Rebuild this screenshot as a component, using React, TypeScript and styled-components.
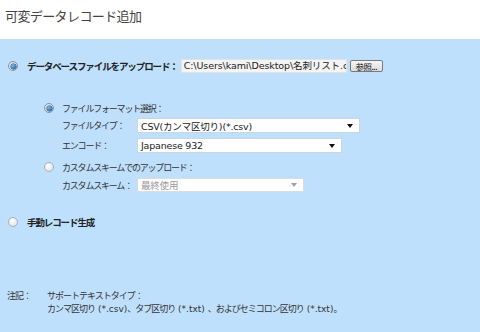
import React from "react";
import styled, { createGlobalStyle } from "styled-components";

const GlobalStyle = createGlobalStyle`
    html, body {
        margin: 0;
        padding: 0;
        background: #ffffff;
    }
    body {
        font-family: "Noto Sans CJK JP", "Noto Sans", sans-serif;
    }
`;

const Radio = ({ checked }: { checked?: boolean }) => (
    <RadioBox $checked={checked}>{checked && <RadioDot />}</RadioBox>
);

const App = () => {
    return (
        <>
            <GlobalStyle />
            <Page>
                <Title>可変データレコード追加</Title>
                <Panel>
                    <OptionRow>
                        <Radio checked />
                        <BoldLabel>データベースファイルをアップロード：</BoldLabel>
                        <FileInput>C:\Users\kami\Desktop\名刺リスト.c</FileInput>
                        <BrowseButton>参照...</BrowseButton>
                    </OptionRow>

                    <SubSection>
                        <OptionRow>
                            <Radio checked />
                            <Label>ファイルフォーマット選択：</Label>
                        </OptionRow>
                        <FieldGrid>
                            <FieldLabel>ファイルタイプ：</FieldLabel>
                            <Select $width={223}>
                                <SelectText>CSV(カンマ区切り)(*.csv)</SelectText>
                                <Arrow />
                            </Select>
                            <FieldLabel>エンコード：</FieldLabel>
                            <Select $width={205}>
                                <SelectText>Japanese 932</SelectText>
                                <Arrow />
                            </Select>
                        </FieldGrid>

                        <OptionRow $top={7}>
                            <Radio />
                            <Label>カスタムスキームでのアップロード：</Label>
                        </OptionRow>
                        <FieldGrid $top={4}>
                            <FieldLabel>カスタムスキーム：</FieldLabel>
                            <Select $width={167} $height={14} $disabled>
                                <SelectText>最終使用</SelectText>
                                <Arrow $disabled />
                            </Select>
                        </FieldGrid>
                    </SubSection>

                    <OptionRow $top={23}>
                        <Radio />
                        <BoldLabel>手動レコード生成</BoldLabel>
                    </OptionRow>

                    <Notes>
                        <NoteTitle>注記：</NoteTitle>
                        <NoteBody>
                            <div>サポートテキストタイプ：</div>
                            <div>
                                カンマ区切り<Latin> (*.csv)</Latin>、タブ区切り<Latin> (*.txt) </Latin>
                                、およびセミコロン区切り<Latin> (*.txt)</Latin>。
                            </div>
                        </NoteBody>
                    </Notes>
                </Panel>
            </Page>
        </>
    );
};

const Page = styled.div`
    width: 480px;
    height: 332px;
    display: flex;
    flex-direction: column;
    overflow: hidden;
`;

const Title = styled.div`
    height: 39px;
    box-sizing: border-box;
    padding: 7px 0 0 5px;
    font-size: 13px;
    line-height: 18px;
    letter-spacing: -0.6px;
    color: #444444;
`;

const Panel = styled.div`
    flex: 1;
    background-color: #bfe0fc;
    padding: 20px 0 0 8px;
    display: flex;
    flex-direction: column;
`;

const OptionRow = styled.div<{ $top?: number }>`
    display: flex;
    align-items: center;
    height: 14px;
    margin-top: ${(p) => p.$top ?? 0}px;
`;

const RadioBox = styled.span<{ $checked?: boolean }>`
    width: 10px;
    height: 10px;
    box-sizing: border-box;
    border-radius: 50%;
    border: 1px solid ${(p) => (p.$checked ? "#8a9299" : "#a9b0b6")};
    background: ${(p) =>
        p.$checked
            ? "radial-gradient(circle, #e8eef2 0%, #d3d9de 100%)"
            : "radial-gradient(circle at 40% 35%, #ffffff 0%, #e4e7ea 70%, #cfd3d7 100%)"};
    display: flex;
    align-items: center;
    justify-content: center;
    flex-shrink: 0;
`;

const RadioDot = styled.span`
    width: 5px;
    height: 5px;
    border-radius: 50%;
    background: radial-gradient(circle at 40% 35%, #78bdf0 0%, #1c5f9e 80%);
    box-shadow: 0 0 0 0.5px #1b4d7e;
`;

const BoldLabel = styled.span`
    margin-left: 9px;
    font-size: 9.5px;
    font-weight: 700;
    letter-spacing: -1.1px;
    color: #222222;
    white-space: nowrap;
`;

const Label = styled.span`
    margin-left: 8px;
    font-size: 9px;
    letter-spacing: -1.2px;
    color: #333333;
    white-space: nowrap;
`;

const FileInput = styled.div`
    margin-left: 3px;
    width: 166px;
    height: 14px;
    box-sizing: border-box;
    background: #f4f4f4;
    border: 1px solid #e2e2e2;
    padding: 0 2px;
    font-family: "DejaVu Sans", "Noto Sans CJK JP", sans-serif;
    font-size: 9.5px;
    line-height: 12px;
    color: #222222;
    white-space: nowrap;
    overflow: hidden;
    letter-spacing: -0.1px;
`;

const BrowseButton = styled.div`
    margin-left: 3px;
    width: 33px;
    height: 12px;
    box-sizing: border-box;
    border: 1px solid #7a7a7a;
    border-radius: 2px;
    background: linear-gradient(#f6f6f6, #dcdcdc);
    font-size: 8.5px;
    line-height: 10px;
    text-align: center;
    color: #111111;
    letter-spacing: -0.5px;
`;

const SubSection = styled.div`
    display: flex;
    flex-direction: column;
    margin-top: 28px;
    padding-left: 36px;
`;

const FieldGrid = styled.div<{ $top?: number }>`
    display: grid;
    grid-template-columns: 75px auto;
    row-gap: 5px;
    align-items: center;
    justify-items: start;
    margin-top: ${(p) => p.$top ?? 3}px;
    padding-left: 18px;
`;

const FieldLabel = styled.span`
    font-size: 9px;
    letter-spacing: -1.2px;
    color: #333333;
    white-space: nowrap;
`;

const Select = styled.div<{ $width: number; $height?: number; $disabled?: boolean }>`
    width: ${(p) => p.$width}px;
    height: ${(p) => p.$height ?? 15}px;
    box-sizing: border-box;
    background: #ffffff;
    border: 1px solid ${(p) => (p.$disabled ? "#d8dde2" : "#c9d6e2")};
    display: flex;
    align-items: center;
    justify-content: space-between;
    padding: 0 6px 0 3px;
    color: ${(p) => (p.$disabled ? "#9a9a9a" : "#222222")};
`;

const SelectText = styled.span`
    font-family: "DejaVu Sans", "Noto Sans CJK JP", sans-serif;
    font-size: 9.5px;
    letter-spacing: -0.2px;
    white-space: nowrap;
`;

const Arrow = styled.span<{ $disabled?: boolean }>`
    width: 0;
    height: 0;
    border-left: 3.5px solid transparent;
    border-right: 3.5px solid transparent;
    border-top: 4px solid ${(p) => (p.$disabled ? "#a0a0a0" : "#111111")};
`;

const Notes = styled.div`
    display: grid;
    grid-template-columns: 40px auto;
    margin-top: 60px;
    margin-left: -1px;
    font-size: 9px;
    line-height: 13px;
    letter-spacing: -1px;
    color: #333333;
`;

const NoteTitle = styled.div``;

const NoteBody = styled.div`
    white-space: nowrap;
`;

const Latin = styled.span`
    font-family: "DejaVu Sans", sans-serif;
    letter-spacing: 0;
    white-space: pre;
`;

export default App;
